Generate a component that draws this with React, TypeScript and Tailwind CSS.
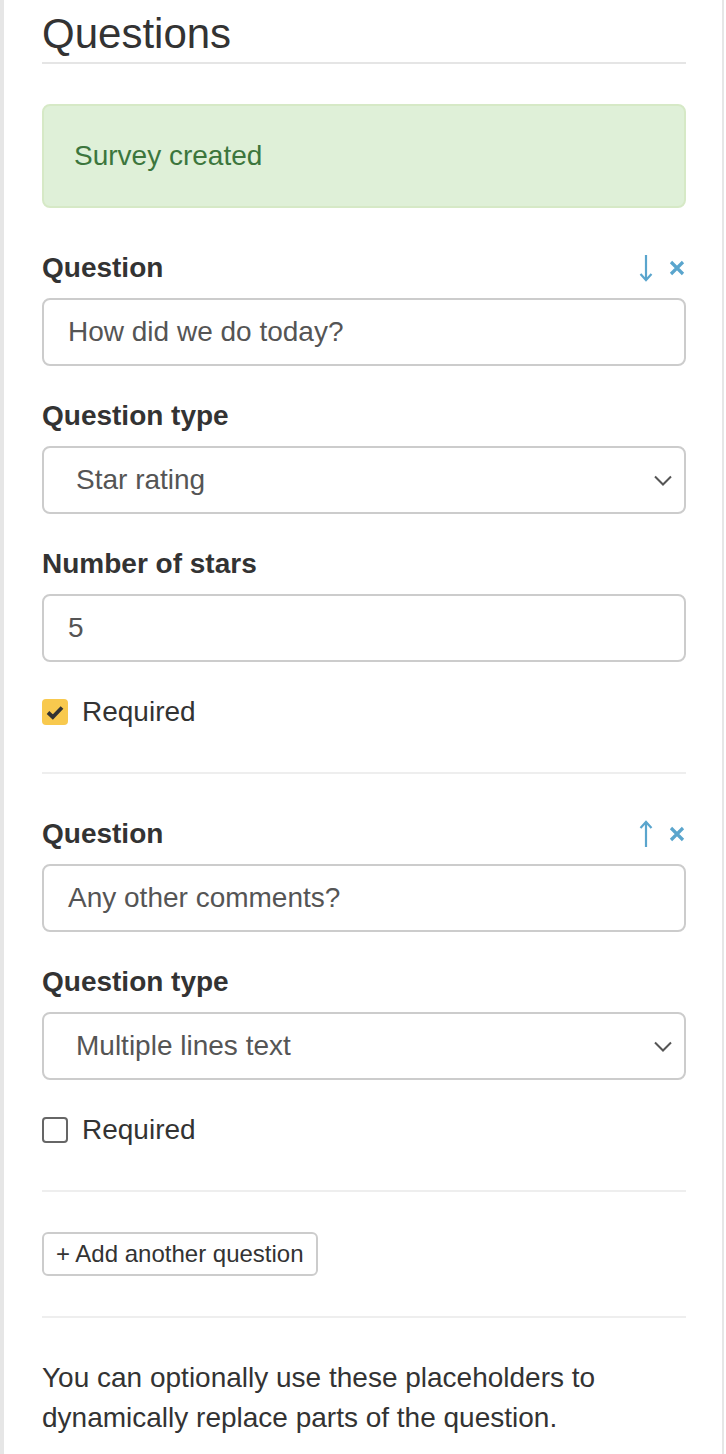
import React from "react";

const font = { fontFamily: '"Liberation Sans", Arial, Helvetica, sans-serif' };

function Label({ children, move }: { children: React.ReactNode; move?: "up" | "down" }) {
  return (
    <div className="mb-[10px] flex h-[40px] items-center justify-between">
      <span className="text-[28px] font-bold leading-[40px] text-[#333]">{children}</span>
      {move && (
        <div className="flex items-center gap-[16px] pr-[1px]">
          <svg width="14" height="28" viewBox="0 0 14 28" fill="none" stroke="#5aa5cd" strokeWidth="2.2">
            {move === "down" ? (
              <>
                <path d="M7 1 V26" />
                <path d="M1.5 20 L7 26 L12.5 20" />
              </>
            ) : (
              <>
                <path d="M7 2 V27" />
                <path d="M1.5 8 L7 2 L12.5 8" />
              </>
            )}
          </svg>
          <svg width="16" height="16" viewBox="0 0 16 16" stroke="#5aa5cd" strokeWidth="3.2">
            <path d="M2 2 L14 14 M14 2 L2 14" />
          </svg>
        </div>
      )}
    </div>
  );
}

function TextInput({ value }: { value: string }) {
  return (
    <div className="flex h-[68px] items-center rounded-[8px] border-2 border-[#ccc] bg-white px-[24px] text-[28px] text-[#555]">
      {value}
    </div>
  );
}

function Select({ value }: { value: string }) {
  return (
    <div className="flex h-[68px] items-center justify-between rounded-[8px] border-2 border-[#ccc] bg-white pl-[32px] pr-[12px] text-[28px] text-[#555]">
      <span>{value}</span>
      <svg width="18" height="11" viewBox="0 0 18 11" fill="none" stroke="#555" strokeWidth="2">
        <path d="M1 1.5 L9 9.5 L17 1.5" />
      </svg>
    </div>
  );
}

function Check({ checked }: { checked: boolean }) {
  return (
    <div className="flex h-[40px] items-center gap-[14px]">
      {checked ? (
        <div className="flex h-[26px] w-[26px] items-center justify-center rounded-[4px] bg-[#f8c94e]">
          <svg width="18" height="15" viewBox="0 0 18 15" fill="none" stroke="#333" strokeWidth="3.8">
            <path d="M2 7.5 L6.8 12 L16 2.5" />
          </svg>
        </div>
      ) : (
        <div className="h-[26px] w-[26px] rounded-[4px] border-2 border-[#666] bg-white" />
      )}
      <span className="text-[28px] text-[#333]">Required</span>
    </div>
  );
}

function Hr() {
  return <div className="my-[40px] h-[2px] bg-[#eee]" />;
}

export default function App() {
  return (
    <div style={font} className="min-h-[1454px] w-[724px] border-l-4 border-r-2 border-[#e6e6e6] bg-white pl-[38px] pr-[36px]">
      <h3 className="border-b-2 border-[#e5e5e5] pb-[5px] pt-[11px] text-[42px] font-normal leading-[46px] text-[#333]">
        Questions
      </h3>

      <div className="mb-[40px] mt-[40px] rounded-[8px] border-2 border-[#d6e9c6] bg-[#dff0d8] px-[30px] py-[30px] text-[28px] leading-[40px] text-[#3c763d]">
        Survey created
      </div>

      <Label move="down">Question</Label>
      <TextInput value="How did we do today?" />
      <div className="h-[30px]" />
      <Label>Question type</Label>
      <Select value="Star rating" />
      <div className="h-[30px]" />
      <Label>Number of stars</Label>
      <TextInput value="5" />
      <div className="h-[30px]" />
      <Check checked />

      <Hr />

      <Label move="up">Question</Label>
      <TextInput value="Any other comments?" />
      <div className="h-[30px]" />
      <Label>Question type</Label>
      <Select value="Multiple lines text" />
      <div className="h-[30px]" />
      <Check checked={false} />

      <Hr />

      <button className="h-[44px] rounded-[6px] border-2 border-[#ccc] bg-white px-[12px] text-[24px] leading-[36px] text-[#333]">
        + Add another question
      </button>

      <Hr />

      <p className="text-[28px] leading-[40px] text-[#333]">
        You can optionally use these placeholders to dynamically replace parts of the question.
      </p>
    </div>
  );
}
